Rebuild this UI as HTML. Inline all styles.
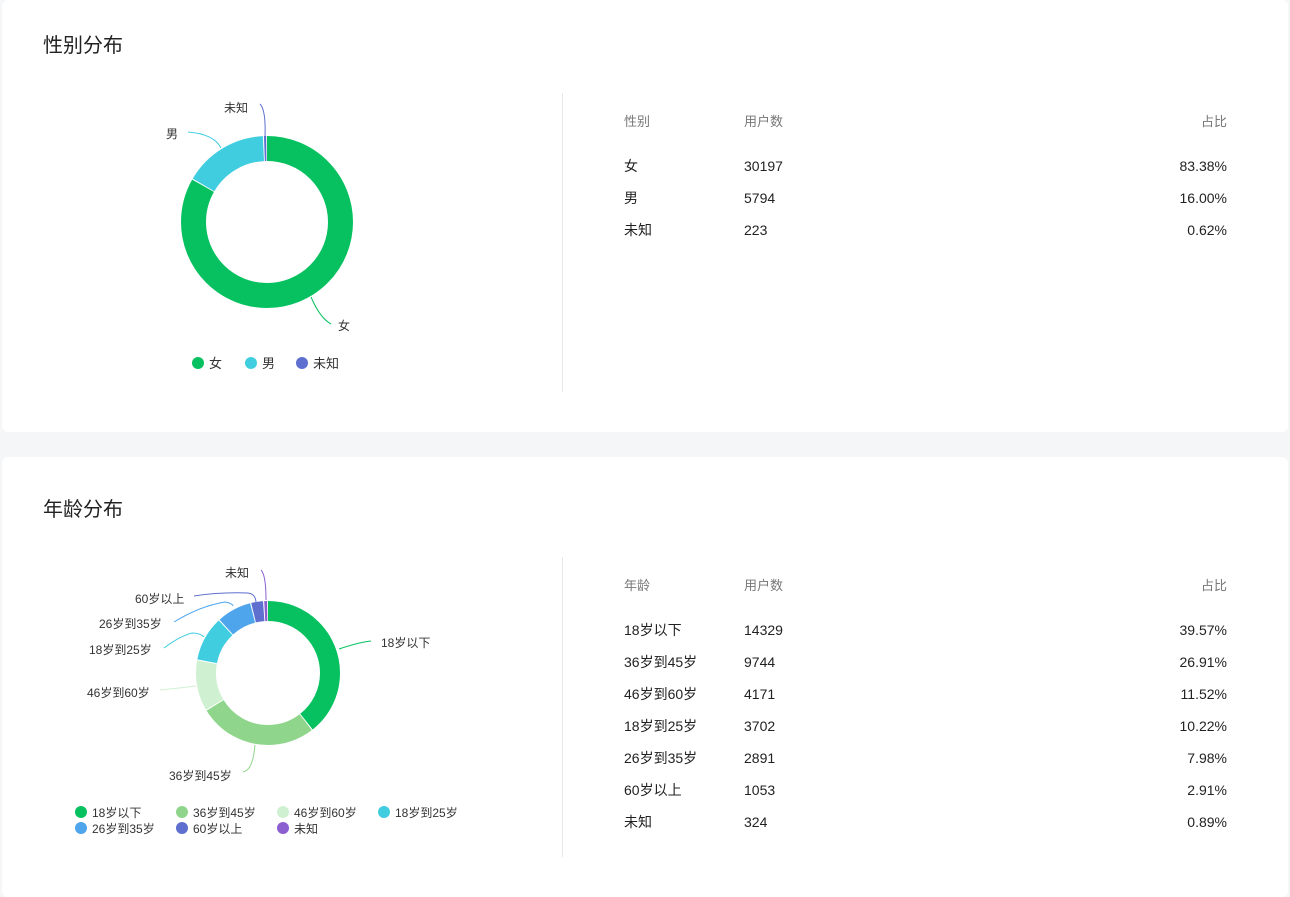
<!DOCTYPE html>
<html><head><meta charset="utf-8"><style>
*{margin:0;padding:0;box-sizing:border-box}
body{width:1290px;height:891px;background:#f5f6f8;font-family:"Liberation Sans","Noto Sans CJK SC",sans-serif;position:relative;overflow:hidden;color:#333}
.card{position:absolute;left:2px;width:1286px;background:#fff;border-radius:6px}
.t{position:absolute;left:41px;font-size:20px;color:#222;line-height:24px}
.div{position:absolute;left:560px;width:1px;background:#e8e8e8}
.tx{position:absolute;font-size:14px;color:#222;white-space:nowrap;line-height:20px;height:20px}
.h{font-size:13px;color:#777}
.r{text-align:right;width:120px}
svg{position:absolute;left:0;top:0}
</style></head><body>
<div class="card" style="top:0;height:432px">
<div class="t" style="top:34px">性别分布</div>
<div class="div" style="top:93px;height:299px"></div>
<div class="tx h" style="left:622px;top:112px">性别</div>
<div class="tx h" style="left:742px;top:112px">用户数</div>
<div class="tx h r" style="left:1105px;top:112px">占比</div>
<div class="tx" style="left:622px;top:156px">女</div><div class="tx" style="left:742px;top:156px">30197</div><div class="tx r" style="left:1105px;top:156px">83.38%</div>
<div class="tx" style="left:622px;top:188px">男</div><div class="tx" style="left:742px;top:188px">5794</div><div class="tx r" style="left:1105px;top:188px">16.00%</div>
<div class="tx" style="left:622px;top:220px">未知</div><div class="tx" style="left:742px;top:220px">223</div><div class="tx r" style="left:1105px;top:220px">0.62%</div>
</div>
<div class="card" style="top:457px;height:440px">
<div class="t" style="top:41px">年龄分布</div>
<div class="div" style="top:100px;height:300px"></div>
<div class="tx h" style="left:622px;top:119px">年龄</div>
<div class="tx h" style="left:742px;top:119px">用户数</div>
<div class="tx h r" style="left:1105px;top:119px">占比</div>
<div class="tx" style="left:622px;top:163px">18岁以下</div><div class="tx" style="left:742px;top:163px">14329</div><div class="tx r" style="left:1105px;top:163px">39.57%</div>
<div class="tx" style="left:622px;top:195px">36岁到45岁</div><div class="tx" style="left:742px;top:195px">9744</div><div class="tx r" style="left:1105px;top:195px">26.91%</div>
<div class="tx" style="left:622px;top:227px">46岁到60岁</div><div class="tx" style="left:742px;top:227px">4171</div><div class="tx r" style="left:1105px;top:227px">11.52%</div>
<div class="tx" style="left:622px;top:259px">18岁到25岁</div><div class="tx" style="left:742px;top:259px">3702</div><div class="tx r" style="left:1105px;top:259px">10.22%</div>
<div class="tx" style="left:622px;top:291px">26岁到35岁</div><div class="tx" style="left:742px;top:291px">2891</div><div class="tx r" style="left:1105px;top:291px">7.98%</div>
<div class="tx" style="left:622px;top:323px">60岁以上</div><div class="tx" style="left:742px;top:323px">1053</div><div class="tx r" style="left:1105px;top:323px">2.91%</div>
<div class="tx" style="left:622px;top:355px">未知</div><div class="tx" style="left:742px;top:355px">324</div><div class="tx r" style="left:1105px;top:355px">0.89%</div>
</div>
<svg width="1290" height="891" font-family="Liberation Sans, Noto Sans CJK SC, sans-serif" font-size="12" fill="#333">
<g transform="translate(267,222) rotate(-90)" fill="none" stroke-width="25">
<circle r="73.5" stroke="#07c160" stroke-dasharray="384.1 1000" stroke-dashoffset="0"/>
<circle r="73.5" stroke="#40cde0" stroke-dasharray="72.9 1000" stroke-dashoffset="-385.1"/>
<circle r="73.5" stroke="#5e6fcf" stroke-dasharray="1.9 1000" stroke-dashoffset="-459"/>
</g>
<g fill="none" stroke-width="1">
<path d="M311 297 Q320 318 331 324" stroke="#07c160"/>
<path d="M221 148 Q214 134 188 132" stroke="#40cde0"/>
<path d="M265 137 Q266 110 260 104" stroke="#5e6fcf"/>
</g>
<text x="338" y="330">女</text><text x="166" y="138">男</text><text x="224" y="112">未知</text>
<circle cx="198" cy="363" r="6" fill="#07c160"/><text x="209" y="368" font-size="13">女</text>
<circle cx="251" cy="363" r="6" fill="#40cde0"/><text x="262" y="368" font-size="13">男</text>
<circle cx="302" cy="363" r="6" fill="#5e6fcf"/><text x="313" y="368" font-size="13">未知</text>

<g transform="translate(268,673) rotate(-90)" fill="none" stroke-width="20">
<circle r="62" stroke="#07c160" stroke-dasharray="153.2 1000" stroke-dashoffset="0"/>
<circle r="62" stroke="#8fd68c" stroke-dasharray="103.8 1000" stroke-dashoffset="-154.2"/>
<circle r="62" stroke="#d0f0d2" stroke-dasharray="43.9 1000" stroke-dashoffset="-259"/>
<circle r="62" stroke="#40cde0" stroke-dasharray="38.8 1000" stroke-dashoffset="-303.9"/>
<circle r="62" stroke="#4ea5ec" stroke-dasharray="30.1 1000" stroke-dashoffset="-343.7"/>
<circle r="62" stroke="#5e6fcf" stroke-dasharray="10.3 1000" stroke-dashoffset="-374.8"/>
<circle r="62" stroke="#8c5fd1" stroke-dasharray="2.5 1000" stroke-dashoffset="-386.1"/>
</g>
<g fill="none" stroke-width="1">
<path d="M339 649 Q360 642 371 641" stroke="#07c160"/>
<path d="M255 745 Q253 770 243 772" stroke="#8fd68c"/>
<path d="M196 686 Q180 688 160 690" stroke="#d0f0d2"/>
<path d="M204 637 Q200 633 192 633 Q180 636 164 648" stroke="#40cde0"/>
<path d="M233 606 Q232 603 225 602 Q200 606 174 622" stroke="#4ea5ec"/>
<path d="M256 603 Q256 594 248 593 Q220 592 194 596" stroke="#5e6fcf"/>
<path d="M266 600 Q266 575 261 570" stroke="#8c5fd1"/>
</g>
<text x="381" y="647">18岁以下</text><text x="169" y="780">36岁到45岁</text><text x="87" y="697">46岁到60岁</text>
<text x="89" y="654">18岁到25岁</text><text x="99" y="628">26岁到35岁</text><text x="135" y="603">60岁以上</text><text x="225" y="577">未知</text>
<circle cx="81" cy="812" r="6" fill="#07c160"/><text x="92" y="817">18岁以下</text>
<circle cx="182" cy="812" r="6" fill="#8fd68c"/><text x="193" y="817">36岁到45岁</text>
<circle cx="283" cy="812" r="6" fill="#d0f0d2"/><text x="294" y="817">46岁到60岁</text>
<circle cx="384" cy="812" r="6" fill="#40cde0"/><text x="395" y="817">18岁到25岁</text>
<circle cx="81" cy="828" r="6" fill="#4ea5ec"/><text x="92" y="833">26岁到35岁</text>
<circle cx="182" cy="828" r="6" fill="#5e6fcf"/><text x="193" y="833">60岁以上</text>
<circle cx="283" cy="828" r="6" fill="#8c5fd1"/><text x="294" y="833">未知</text>
</svg>
</body></html>
